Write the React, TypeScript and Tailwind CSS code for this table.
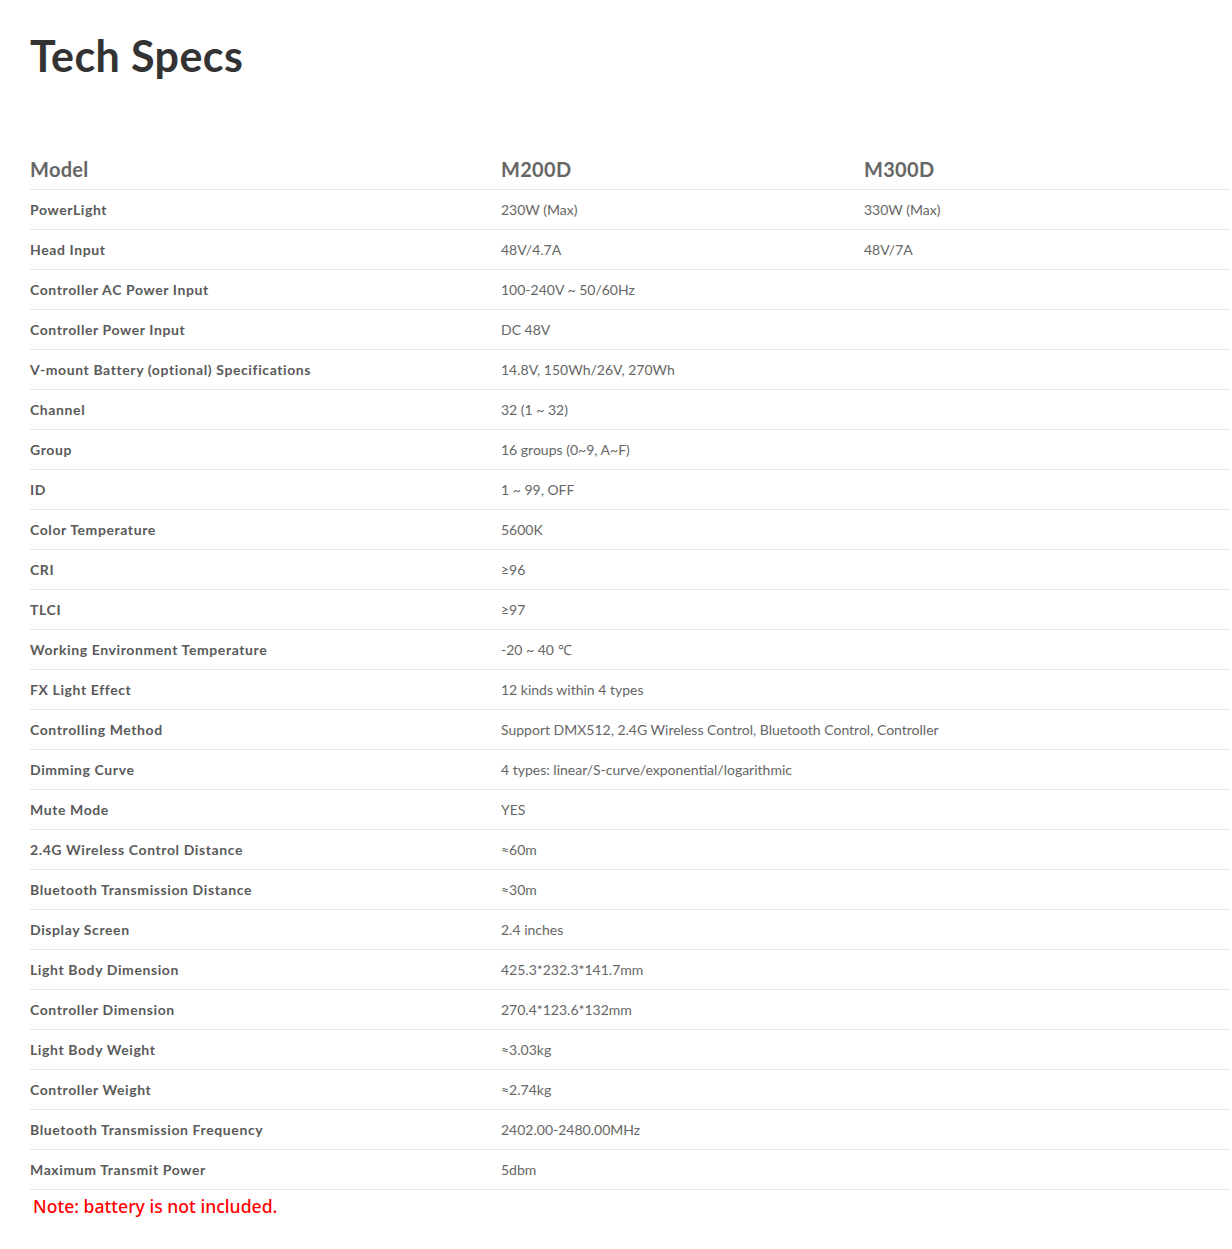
const rows: [string, string, string?][] = [
  ["PowerLight", "230W (Max)", "330W (Max)"],
  ["Head Input", "48V/4.7A", "48V/7A"],
  ["Controller AC Power Input", "100-240V ~ 50/60Hz"],
  ["Controller Power Input", "DC 48V"],
  ["V-mount Battery (optional) Specifications", "14.8V, 150Wh/26V, 270Wh"],
  ["Channel", "32 (1 ~ 32)"],
  ["Group", "16 groups (0~9, A~F)"],
  ["ID", "1 ~ 99, OFF"],
  ["Color Temperature", "5600K"],
  ["CRI", "≥96"],
  ["TLCI", "≥97"],
  ["Working Environment Temperature", "-20 ~ 40 ℃"],
  ["FX Light Effect", "12 kinds within 4 types"],
  ["Controlling Method", "Support DMX512, 2.4G Wireless Control, Bluetooth Control, Controller"],
  ["Dimming Curve", "4 types: linear/S-curve/exponential/logarithmic"],
  ["Mute Mode", "YES"],
  ["2.4G Wireless Control Distance", "≈60m"],
  ["Bluetooth Transmission Distance", "≈30m"],
  ["Display Screen", "2.4 inches"],
  ["Light Body Dimension", "425.3*232.3*141.7mm"],
  ["Controller Dimension", "270.4*123.6*132mm"],
  ["Light Body Weight", "≈3.03kg"],
  ["Controller Weight", "≈2.74kg"],
  ["Bluetooth Transmission Frequency", "2402.00-2480.00MHz"],
  ["Maximum Transmit Power", "5dbm"],
]

export default function App() {
  return (
    <div className="min-h-[1249px] bg-white pl-[30px] font-['Lato',sans-serif]">
      <h1 className="pt-[30px] text-[43px] font-bold leading-[52px] tracking-[0.4px] text-[#333]">Tech Specs</h1>
      <div className="mt-[68px] w-[1200px]">
        <div className="grid h-[40px] grid-cols-[471px_363px_1fr] items-center border-b border-[#e6e6e6] pb-[2px] text-[20px] font-bold tracking-[0.3px] text-[#666]">
          <div>Model</div>
          <div>M200D</div>
          <div>M300D</div>
        </div>
        {rows.map(([label, a, b]) => (
          <div key={label} className="grid h-[40px] grid-cols-[471px_363px_1fr] items-center border-b border-[#e6e6e6] pb-[1px] text-[14px]">
            <div className="font-bold tracking-[0.6px] text-[#5a5a5a]">{label}</div>
            <div className={b ? "text-[#666]" : "col-span-2 text-[#666]"}>{a}</div>
            {b && <div className="text-[#666]">{b}</div>}
          </div>
        ))}
      </div>
      <p className="mt-[2px] pl-[3px] font-['Noto_Sans',sans-serif] text-[17.6px] font-medium leading-[28px] text-[#ff0000]">
        Note: battery is not included.
      </p>
    </div>
  )
}
